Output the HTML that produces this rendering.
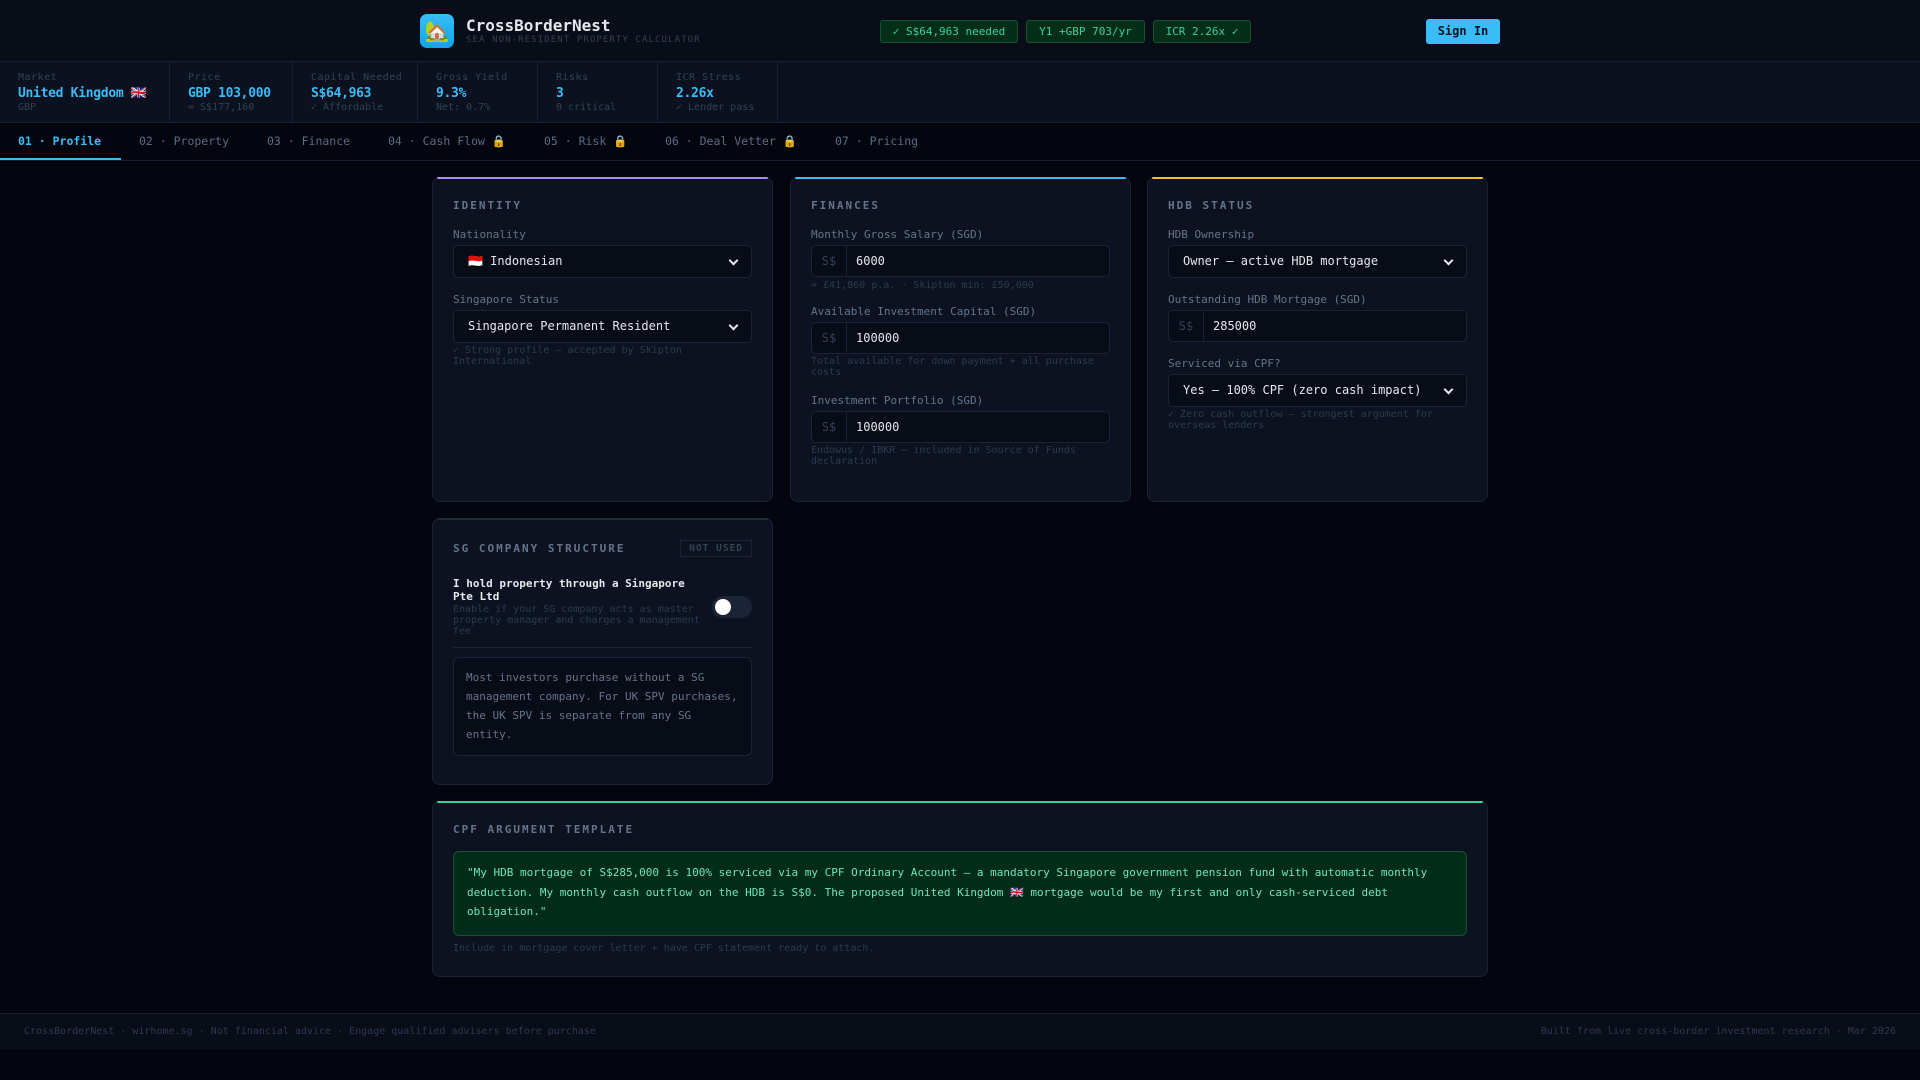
<!DOCTYPE html>
<html><head><meta charset="utf-8"><style>
*{box-sizing:border-box;margin:0;padding:0}
body{width:1920px;height:1080px;background:#03060e;font-family:"DejaVu Sans Mono","Liberation Mono",monospace;color:#cbd5e1;overflow:hidden;position:relative}
.hdr{height:62px;background:#080d18;border-bottom:1px solid #172033;position:relative}
.logo{position:absolute;left:420px;top:14px;width:34px;height:34px;border-radius:7px;background:linear-gradient(180deg,#38bdf8,#0ea5e9);display:flex;align-items:center;justify-content:center;font-size:20px}
.brand{position:absolute;left:466px;top:16px;font-size:16px;font-weight:bold;color:#e5e7eb}
.sub{position:absolute;left:466px;top:35px;font-size:9px;letter-spacing:1.1px;color:#334155}
.pill{position:absolute;top:20px;height:23px;border:1px solid #14532d;background:#052e1a;color:#34d399;font-size:11px;border-radius:3px;line-height:21px;text-align:center}
.sign{position:absolute;left:1426px;top:19px;width:74px;height:25px;background:#38bdf8;color:#0b1220;border-radius:3px;font-weight:bold;font-size:12px;text-align:center;line-height:25px}
.stats{height:61px;background:#0b111e;border-bottom:1px solid #172033;display:flex}
.st{border-right:1px solid #172033;padding:10px 0 0 18px;white-space:nowrap;overflow:hidden}
.st .l{font-size:10px;color:#334155;letter-spacing:.5px}
.st .v{font-size:13px;color:#38bdf8;font-weight:bold;margin-top:3px;letter-spacing:-.3px}
.st .s{font-size:10px;color:#334155;margin-top:1px}
.tabs{height:38px;background:#03060e;border-bottom:1px solid #172033;position:relative}
.tab{position:absolute;top:11px;font-size:11.5px;color:#5b6b85}
.tab.a{color:#38bdf8;font-weight:bold}
.ul{position:absolute;left:0;top:35px;width:121px;height:2px;background:#38bdf8}
.card{position:absolute;background:#0c1220;border:1px solid #1b2436;border-radius:8px;padding:0 20px}
.card::before{content:"";position:absolute;left:4px;right:4px;top:-1px;height:2px;border-radius:2px;background:var(--c)}
.ct{font-size:11px;font-weight:bold;letter-spacing:2px;color:#64748b;margin-top:21px}
.lbl{font-size:11px;color:#64748b;margin-top:15px;margin-bottom:4px}
.ct+.lbl{margin-top:16px}
.sel{height:33px;background:#080c16;border:1px solid #1b2436;border-radius:5px;font-size:12px;color:#e5e7eb;line-height:31px;padding-left:14px;position:relative}
.sel::after{content:"";position:absolute;right:14px;top:11px;width:5px;height:5px;border-right:2px solid #e5e7eb;border-bottom:2px solid #e5e7eb;transform:rotate(45deg)}
.inp{height:32px;background:#080c16;border:1px solid #1b2436;border-radius:5px;font-size:12px;color:#e5e7eb;line-height:30px;display:flex}
.inp .p{width:35px;border-right:1px solid #1b2436;color:#334155;text-align:center}
.inp .t{padding-left:9px}
.h{font-size:10px;color:#2c3a50;margin-top:2px;line-height:11px}
.foot{position:absolute;left:0;top:1013px;width:1920px;height:36px;background:#080d18;border-top:1px solid #172033;font-size:10px;color:#2c3a50}
</style></head><body>
<div class="hdr">
<div class="logo">🏡</div>
<div class="brand">CrossBorderNest</div>
<div class="sub">SEA NON-RESIDENT PROPERTY CALCULATOR</div>
<div class="pill" style="left:880px;width:138px">✓ S$64,963 needed</div>
<div class="pill" style="left:1026px;width:119px">Y1 +GBP 703/yr</div>
<div class="pill" style="left:1153px;width:98px">ICR 2.26x ✓</div>
<div class="sign">Sign In</div>
</div>
<div class="stats">
<div class="st" style="width:170px"><div class="l">Market</div><div class="v">United Kingdom 🇬🇧</div><div class="s">GBP</div></div>
<div class="st" style="width:123px"><div class="l">Price</div><div class="v">GBP 103,000</div><div class="s">≈ S$177,160</div></div>
<div class="st" style="width:125px"><div class="l">Capital Needed</div><div class="v">S$64,963</div><div class="s">✓ Affordable</div></div>
<div class="st" style="width:120px"><div class="l">Gross Yield</div><div class="v">9.3%</div><div class="s">Net: 0.7%</div></div>
<div class="st" style="width:120px"><div class="l">Risks</div><div class="v">3</div><div class="s">0 critical</div></div>
<div class="st" style="width:120px"><div class="l">ICR Stress</div><div class="v">2.26x</div><div class="s">✓ Lender pass</div></div>
</div>
<div class="tabs">
<div class="tab a" style="left:18px">01 · Profile</div>
<div class="tab" style="left:139px">02 · Property</div>
<div class="tab" style="left:267px">03 · Finance</div>
<div class="tab" style="left:388px">04 · Cash Flow 🔒</div>
<div class="tab" style="left:544px">05 · Risk 🔒</div>
<div class="tab" style="left:665px">06 · Deal Vetter 🔒</div>
<div class="tab" style="left:835px">07 · Pricing</div>
<div class="ul"></div>
</div>

<div class="card" style="--c:#a78bfa;left:432px;top:177px;width:341px;height:325px">
<div class="ct">IDENTITY</div>
<div class="lbl">Nationality</div>
<div class="sel">🇮🇩 Indonesian</div>
<div class="lbl">Singapore Status</div>
<div class="sel">Singapore Permanent Resident</div>
<div class="h">✓ Strong profile — accepted by Skipton International</div>
</div>

<div class="card" style="--c:#38bdf8;left:790px;top:177px;width:341px;height:325px">
<div class="ct">FINANCES</div>
<div class="lbl">Monthly Gross Salary (SGD)</div>
<div class="inp"><span class="p">S$</span><span class="t">6000</span></div>
<div class="h" style="margin-top:3px">≈ £41,860 p.a. · Skipton min: £50,000</div>
<div class="lbl" style="margin-top:14px">Available Investment Capital (SGD)</div>
<div class="inp"><span class="p">S$</span><span class="t">100000</span></div>
<div class="h">Total available for down payment + all purchase costs</div>
<div class="lbl" style="margin-top:16px">Investment Portfolio (SGD)</div>
<div class="inp"><span class="p">S$</span><span class="t">100000</span></div>
<div class="h">Endowus / IBKR — included in Source of Funds declaration</div>
</div>

<div class="card" style="--c:#fbbf24;left:1147px;top:177px;width:341px;height:325px">
<div class="ct">HDB STATUS</div>
<div class="lbl">HDB Ownership</div>
<div class="sel">Owner — active HDB mortgage</div>
<div class="lbl">Outstanding HDB Mortgage (SGD)</div>
<div class="inp"><span class="p">S$</span><span class="t">285000</span></div>
<div class="lbl">Serviced via CPF?</div>
<div class="sel">Yes — 100% CPF (zero cash impact)</div>
<div class="h">✓ Zero cash outflow — strongest argument for overseas lenders</div>
</div>

<div class="card" style="--c:#1e293b;left:432px;top:518px;width:341px;height:267px">
<div class="ct" style="display:flex;justify-content:space-between;align-items:center">SG COMPANY STRUCTURE<span style="font-size:9.5px;letter-spacing:1px;border:1px solid #1b2436;padding:2px 8px;color:#334155;font-weight:bold">NOT USED</span></div>
<div style="display:flex;margin-top:20px;border-bottom:1px solid #1b2436;padding-bottom:10px">
<div style="width:252px"><div style="font-size:11px;font-weight:bold;color:#e5e7eb;line-height:13px">I hold property through a Singapore Pte Ltd</div><div class="h" style="line-height:11px;margin-top:1px">Enable if your SG company acts as master property manager and charges a management fee</div></div>
<div style="margin-left:10px;margin-top:19px;width:41px;height:22px;background:#1b2436;border-radius:11px;position:relative"><div style="position:absolute;left:3px;top:3px;width:16px;height:16px;border-radius:50%;background:#fff"></div></div>
</div>
<div style="margin-top:9px;background:#080c16;border:1px solid #1b2436;border-radius:6px;padding:10px 12px 11px;font-size:11px;line-height:19px;color:#64748b">Most investors purchase without a SG management company. For UK SPV purchases, the UK SPV is separate from any SG entity.</div>
</div>

<div class="card" style="--c:#34d399;left:432px;top:801px;width:1056px;height:176px">
<div class="ct">CPF ARGUMENT TEMPLATE</div>
<div style="margin-top:15px;background:#022c1a;border:1px solid #14532d;border-radius:6px;padding:11px 13px;font-size:11px;line-height:19.5px;color:#6ee7b7;height:85px">"My HDB mortgage of S$285,000 is 100% serviced via my CPF Ordinary Account — a mandatory Singapore government pension fund with automatic monthly deduction. My monthly cash outflow on the HDB is S$0. The proposed United Kingdom 🇬🇧 mortgage would be my first and only cash-serviced debt obligation."</div>
<div class="h" style="margin-top:7px">Include in mortgage cover letter + have CPF statement ready to attach.</div>
</div>

<div class="foot"><span style="position:absolute;left:24px;top:12px">CrossBorderNest · wirhome.sg · Not financial advice · Engage qualified advisers before purchase</span><span style="position:absolute;right:24px;top:12px">Built from live cross-border investment research · Mar 2026</span></div>
</body></html>
